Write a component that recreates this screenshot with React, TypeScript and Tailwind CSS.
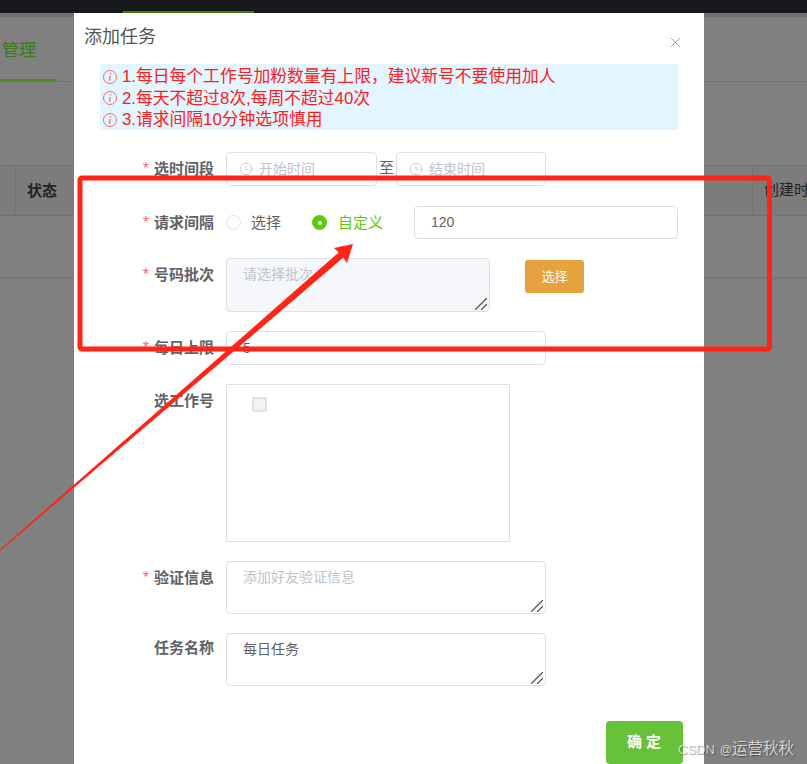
import { Clock, X } from "lucide-react"
import type { ReactNode } from "react"

const font = { fontFamily: '"Liberation Sans", "Noto Sans CJK SC", sans-serif' }

const tips = ["1.每日每个工作号加粉数量有上限，建议新号不要使用加人", "2.每天不超过8次,每周不超过40次", "3.请求间隔10分钟选项慎用"]

const TipIcon = () => (
  <svg width="16" height="16" viewBox="0 0 16 16" fill="none" stroke="#f56c6c" className="shrink-0">
    <circle cx="8" cy="8" r="6.5" />
    <path d="M8.6 4.2v1.2M8.2 7 7.5 11.6" strokeWidth="1.3" />
  </svg>
)

const Row = ({ label, required, className, labelClass = "pt-[5px]", children }: { label: string; required?: boolean; className: string; labelClass?: string; children: ReactNode }) => (
  <div className={`flex gap-3 ${className}`}>
    <label className={`w-[114px] shrink-0 text-right text-[15px] leading-[20px] font-bold text-[#606266] ${labelClass}`}>
      {required && <span className="mr-[5px] text-base font-normal text-[#f56c6c]">*</span>}
      {label}
    </label>
    {children}
  </div>
)

const TimeInput = ({ text, className }: { text: string; className: string }) => (
  <div className={`flex h-[34px] items-center gap-[6px] rounded border border-[#dcdfe6] px-3 pb-[1px] text-sm text-[#c0c4cc] ${className}`}>
    <Clock size={14} strokeWidth={1.5} />
    {text}
  </div>
)

const Area = ({ className, placeholder, value }: { className: string; placeholder?: string; value?: string }) => (
  <div className="relative">
    <textarea
      placeholder={placeholder}
      defaultValue={value}
      className={`block resize-none rounded border border-[#dcdfe6] px-4 py-[5px] text-sm leading-[20px] text-[#606266] outline-none placeholder:text-[#c0c4cc] ${className}`}
    />
    <svg className="absolute right-[3px] bottom-[2px]" width="12" height="12" viewBox="0 0 12 12" stroke="#555" strokeWidth="1.3">
      <path d="M0 12 12 0M6 12l6-6" />
    </svg>
  </div>
)

const Background = () => (
  <div className="flex h-full flex-col">
    <div className="flex h-[13px] shrink-0 bg-[#17181c]">
      <div className="mt-[11px] ml-[123px] h-[2px] w-[131px] bg-[#3f7a12]" />
    </div>
    <div className="h-1 shrink-0 bg-[#6f6e7c]" />
    <div className="flex h-[65px] shrink-0 items-end border-b border-[#737373]">
      <div className="h-[64px] w-[57px] border-b-2 border-[#4c8a1e] pt-[22px] pl-[2px] text-[17px] leading-[24px] text-[#3f7a1a]">管理</div>
    </div>
    <div className="mt-[83px] flex h-[51px] shrink-0 items-center justify-between border-y border-[#737373] bg-[#7c7c7c] text-[15px] text-[#222]">
      <div className="ml-[15px] flex h-full items-center border-l border-[#737373] pt-[2px] pl-[11px] font-bold">状态</div>
      <div className="flex h-full w-[55px] items-center border-l border-[#737373] pl-[11px] whitespace-nowrap">创建时</div>
    </div>
    <div className="h-[63px] shrink-0 border-b-2 border-[#777580]" />
  </div>
)

const Annotation = () => (
  <svg className="pointer-events-none absolute inset-0" width="807" height="764" viewBox="0 0 807 764" fill="none">
    <rect x="80" y="178" width="689.5" height="171" rx="2" stroke="#ff2416" strokeWidth="5" />
    <polygon points="0,549.5 338.7,252.4 334,248 353,244 347,263 343.3,257.6 0,551" fill="#ff2416" />
  </svg>
)

export default function App() {
  return (
    <div className="relative h-[764px] w-[807px] overflow-hidden bg-[#808080]" style={font}>
      <Background />

      <div className="absolute top-[13px] left-[74px] h-[760px] w-[630px] bg-white px-[26px]">
        <div className="-mx-4 flex h-[51px] items-start justify-between pt-[11px]">
          <h2 className="text-lg leading-[26px] text-[#555]">添加任务</h2>
          <X size={17} strokeWidth={1.2} className="mt-[10px] mr-[10px] text-[#909399]" />
        </div>

        <div className="h-[66px] bg-[#e3f5fe] pt-[2px]">
          {tips.map((t) => (
            <div key={t} className="flex h-[21.5px] items-center gap-1 pl-[2px] text-[16.8px] whitespace-nowrap text-[#fb2020]">
              <TipIcon />
              {t}
            </div>
          ))}
        </div>

        <Row label="选时间段" required className="mt-[22px]">
          <div className="flex items-start text-[15px] leading-[32px] text-[#606266]">
            <TimeInput text="开始时间" className="w-[151px]" />
            <span className="w-[19px] text-center">至</span>
            <TimeInput text="结束时间" className="w-[150px]" />
          </div>
        </Row>

        <Row label="请求间隔" required className="mt-[20px]">
          <div className="flex h-[33px] flex-1 items-center text-sm">
            <span className="h-[15px] w-[15px] rounded-full border border-[#dcdfe6]" />
            <span className="ml-[10px] text-[15px] text-[#606266]">选择</span>
            <span className="ml-[31px] flex h-[15px] w-[15px] items-center justify-center rounded-full bg-[#5dc90a]">
              <span className="h-1 w-1 rounded-full bg-white" />
            </span>
            <span className="ml-[11px] text-[15px] text-[#5dc90a]">自定义</span>
            <div className="ml-auto flex h-[33px] w-[264px] items-center rounded border border-[#dcdfe6] px-4 pb-[1px] text-sm text-[#606266]">120</div>
          </div>
        </Row>

        <Row label="号码批次" required className="mt-[19px]">
          <Area placeholder="请选择批次" className="h-[54px] w-[264px] bg-[#f5f7fa]" />
          <button className="mt-[2px] ml-[23px] h-[33px] w-[59px] rounded-[3px] bg-[#e6a23c] text-[13px] text-white">选择</button>
        </Row>

        <Row label="每日上限" required className="mt-[19px]">
          <div className="flex h-[34px] w-[320px] items-center rounded border border-[#dcdfe6] px-4 text-sm text-[#606266]">5</div>
        </Row>

        <Row label="选工作号" labelClass="pt-[7px]" className="mt-[19px]">
          <div className="h-[158px] w-[284px] border border-[#dcdfe6] pt-3 pl-[25px]">
            <div className="h-[15px] w-[15px] rounded-[2px] border-2 border-[#dcdfe6] bg-[#f2f3f5]" />
          </div>
        </Row>

        <Row label="验证信息" required className="mt-[19px]">
          <Area placeholder="添加好友验证信息" className="h-[53px] w-[320px]" />
        </Row>

        <Row label="任务名称" className="mt-[19px]">
          <Area value="每日任务" className="h-[53px] w-[320px]" />
        </Row>

        <div className="mt-[35px] flex justify-end">
          <button className="-mr-[5px] h-[43px] w-[77px] rounded-[4px] bg-[#67c23a] pl-[3px] text-[15px] font-bold tracking-[4px] text-white">确定</button>
        </div>
      </div>

      <Annotation />

      <div className="absolute top-[737px] left-[678px] text-[15.5px] whitespace-nowrap text-white/70 [text-shadow:1px_1px_1px_rgba(0,0,0,0.4)]">
        <span className="mr-[5px] text-[13px]">CSDN</span>
        <span className="text-[12px]">@</span>运营秋秋
      </div>
    </div>
  )
}
